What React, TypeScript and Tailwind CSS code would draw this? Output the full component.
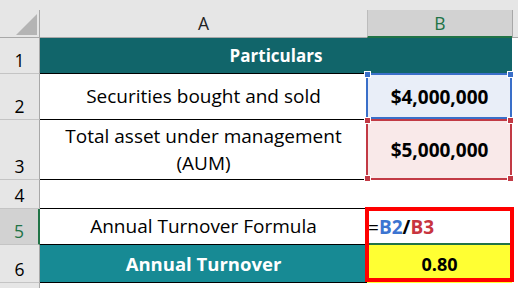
import React from 'react';

// Corner square handle shown on Excel's reference frames
const Handle = ({ color, pos }: { color: string; pos: string }) => (
    <span className={`absolute w-[7px] h-[7px] border border-white ${color} ${pos}`} />
);

const RowHead = ({ n, active }: { n: number; active?: boolean }) => (
    <div
        className={`w-[40px] shrink-0 flex items-end justify-center pb-[3px] border-b border-b-[#c4c4c4] text-[17.5px] ${
            active
                ? 'bg-[#d2d2d2] border-r-2 border-r-[#217346] text-[#217346]'
                : 'bg-[#e6e6e6] border-r border-r-[#a8a8a8] text-black'
        }`}
    >
        <span className="leading-[20px]">{n}</span>
    </div>
);

export default function App() {
    return (
        <div className="w-[518px] h-[288px] overflow-hidden bg-white font-['Open_Sans',sans-serif] text-[19px] text-black">
            {/* Column headers */}
            <div className="h-[38px] pt-[10px] bg-[#e6e6e6] flex text-[17.5px]">
                <div className="w-[40px] shrink-0 border-r border-b border-[#a8a8a8] flex items-end justify-end pr-[2px] pb-[2px]">
                    <svg width="21" height="21" viewBox="0 0 21 21">
                        <polygon points="21,0 21,21 0,21" fill="#b4b4b4" />
                    </svg>
                </div>
                <div className="w-[327px] shrink-0 border-b border-[#a8a8a8] flex items-center justify-center text-[#222]">
                    A
                </div>
                <div className="w-[145px] shrink-0 bg-[#d2d2d2] border-b-2 border-[#217346] border-l border-l-[#bcbcbc] flex items-center justify-center text-[#217346]">
                    B
                </div>
                <div className="flex-1 border-b border-l border-[#a8a8a8]" />
            </div>

            {/* Row 1 */}
            <div className="h-[36px] flex">
                <RowHead n={1} />
                <div className="w-[472px] shrink-0 bg-[#11656a] border-b border-black flex items-center justify-center font-bold text-white text-[17px]">
                    Particulars
                </div>
            </div>

            {/* Row 2 */}
            <div className="h-[46px] flex">
                <RowHead n={2} />
                <div className="w-[327px] shrink-0 border-b border-black flex items-center justify-center">
                    Securities bought and sold
                </div>
                <div className="w-[145px] shrink-0 relative bg-[#e9eef8] flex items-center justify-center font-bold">
                    $4,000,000
                    <div className="absolute z-10 left-[-1px] top-[-1px] w-[146px] h-[46px] border-2 border-[#3a6fc9]">
                        <Handle color="bg-[#3a6fc9]" pos="-left-[4px] -top-[4px]" />
                        <Handle color="bg-[#3a6fc9]" pos="-right-[4px] -top-[4px]" />
                    </div>
                </div>
            </div>

            {/* Row 3 */}
            <div className="h-[60px] flex">
                <RowHead n={3} />
                <div className="w-[327px] shrink-0 border-b border-black flex flex-col items-center justify-center leading-[27px]">
                    <span>Total asset under management</span>
                    <span>(AUM)</span>
                </div>
                <div className="w-[145px] shrink-0 relative bg-[#f9e9e9] flex items-center justify-center font-bold">
                    $5,000,000
                    <div className="absolute z-10 left-[-1px] top-[-1px] w-[146px] h-[61px] border-2 border-[#c23a45]">
                        <Handle color="bg-[#c23a45]" pos="-left-[4px] -top-[4px]" />
                        <Handle color="bg-[#c23a45]" pos="-right-[4px] -top-[4px]" />
                        <Handle color="bg-[#c23a45]" pos="-left-[4px] -bottom-[4px]" />
                        <Handle color="bg-[#c23a45]" pos="-right-[4px] -bottom-[4px]" />
                    </div>
                </div>
            </div>

            {/* Row 4 */}
            <div className="h-[29px] flex">
                <RowHead n={4} />
                <div className="w-[472px] shrink-0 border-b border-black" />
            </div>

            {/* Row 5 */}
            <div className="h-[36px] flex">
                <RowHead n={5} active />
                <div className="w-[327px] shrink-0 border-b border-black flex items-center justify-center">
                    Annual Turnover Formula
                </div>
                <div className="w-[145px] shrink-0 relative border-b-2 border-[#217346] flex items-center pl-[1px] pt-[2px]">
                    <span>=</span>
                    <span className="font-bold text-[#3c74d1]">B2</span>
                    <span className="font-bold">/</span>
                    <span className="font-bold text-[#c8343f]">B3</span>
                    <div className="absolute z-10 left-[-2px] top-[-2px] w-[149px] h-[75px] border-4 border-[#ff0000]" />
                </div>
            </div>

            {/* Row 6 */}
            <div className="h-[38px] flex">
                <RowHead n={6} />
                <div className="w-[327px] shrink-0 bg-[#178a94] border-b border-black flex items-center justify-center font-bold text-white text-[18.5px]">
                    Annual Turnover
                </div>
                <div className="w-[145px] shrink-0 bg-[#ffff33] flex items-center justify-center font-bold text-[18px]">
                    0.80
                </div>
            </div>

            {/* Row 7 */}
            <div className="h-[20px] flex">
                <div className="w-[40px] shrink-0 bg-[#e6e6e6] border-r border-[#a8a8a8]" />
            </div>
        </div>
    );
}
